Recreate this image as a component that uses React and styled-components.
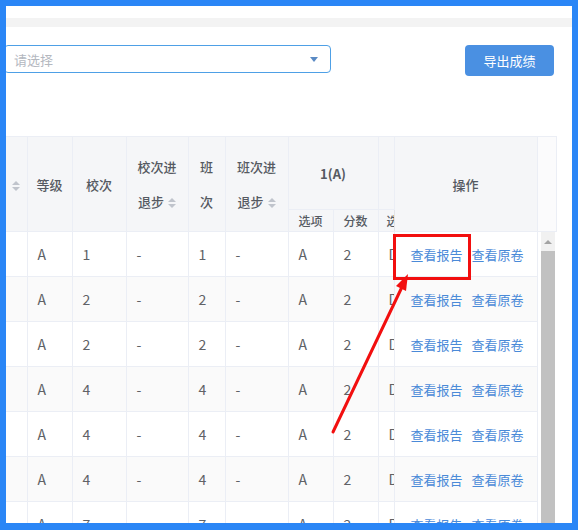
import React from 'react'
import styled, { createGlobalStyle } from 'styled-components'

const Global = createGlobalStyle`
body{
margin:0;
background:#fff;
font-family:"Noto Sans CJK SC","Liberation Sans",sans-serif;
}
`

const Frame = styled.div`
position:relative;
width:578px;
height:530px;
box-sizing:border-box;
border:6px solid #2a86f6;
border-bottom-width:7px;
background:#fff;
overflow:hidden;
`

const Content = styled.div`
display:flex;
flex-direction:column;
height:100%;
overflow:hidden;
`

const TopStrip = styled.div`
height:12px;
background:#fff;
`
const GrayBand = styled.div`
height:9px;
background:#f3f3f3;
`

const Toolbar = styled.div`
display:flex;
align-items:flex-start;
justify-content:space-between;
padding:18px 18px 0 0;
height:31px;
margin-left:-2px;
`

const Select = styled.div`
width:327px;
height:28px;
border:1px solid #4ea0e6;
border-radius:4px;
display:flex;
align-items:center;
justify-content:space-between;
padding:0 12px 0 9px;
box-sizing:border-box;
`
const Placeholder = styled.span`
font-size:13px;
color:#b4b8bf;
`
const Caret = styled.span`
width:0;
height:0;
border-left:4px solid transparent;
border-right:4px solid transparent;
border-top:5px solid #5a8ac4;
`

const ExportButton = styled.button`
width:89px;
height:31px;
border:none;
border-radius:4px;
background:#4a90e2;
color:#fff;
font-size:13px;
font-family:inherit;
`

const TableArea = styled.div`
display:flex;
margin-top:60px;
flex:1;
min-height:0;
`

const Table = styled.table`
width:531px;
table-layout:fixed;
border-collapse:collapse;
border-top:1px solid #ebeef5;
flex:none;
align-self:flex-start;
`

const Th = styled.th`
background:#f5f6f8;
border-right:1px solid #ebeef5;
border-bottom:1px solid #ebeef5;
color:#555a62;
font-size:13px;
font-weight:${p => (p.$bold ? 700 : 500)};
padding:0;
height:${p => p.$h || 'auto'};
text-align:center;
line-height:35px;
overflow:hidden;
white-space:nowrap;
${p => p.$fixed && 'border-left:1px solid #e2e4e8;'}
`

const SubTh = styled(Th)`
font-size:12px;
line-height:20px;
height:21px;
text-align:${p => (p.$left ? 'left' : 'center')};
padding-left:${p => (p.$left ? '8px' : '0')};
`

const Row = styled.tr`
background:${p => (p.$striped ? '#fafafa' : '#fff')};
`

const Td = styled.td`
height:44px;
padding:0 0 0 10px;
border-right:1px solid #ebeef5;
border-bottom:1px solid #ebeef5;
font-size:14px;
color:#606266;
overflow:hidden;
white-space:nowrap;
${p => p.$fixed && 'border-left:1px solid #e2e4e8; padding-left:16px;'}
`

const Link = styled.a`
color:#4a8ad8;
font-size:13px;
margin-right:9px;
cursor:pointer;
`

const SortIcon = styled.span`
display:inline-flex;
flex-direction:column;
gap:2px;
vertical-align:middle;
margin-left:${p => p.$ml || '4px'};
&::before,&::after{
content:'';
width:0;
height:0;
border-left:4px solid transparent;
border-right:4px solid transparent;
}
&::before{border-bottom:4px solid #c0c4cc;}
&::after{border-top:4px solid #c0c4cc;}
`

const Gutter = styled.div`
width:19px;
display:flex;
flex-direction:column;
flex:none;
`
const GutterHead = styled.div`
height:96px;
box-sizing:border-box;
border-top:1px solid #ebeef5;
border-right:1px solid #ebeef5;
border-bottom:1px solid #ebeef5;
background:#fbfbfc;
`
const Track = styled.div`
flex:1;
margin:0 2px 0 3px;
background:#f1f1f1;
display:flex;
flex-direction:column;
align-items:center;
`
const UpArrow = styled.span`
margin-top:8px;
width:0;
height:0;
border-left:4px solid transparent;
border-right:4px solid transparent;
border-bottom:4px solid #a3a3a3;
`
const Thumb = styled.div`
margin-top:7px;
width:100%;
flex:1;
background:#c1c1c1;
`

const Highlight = styled.div`
position:absolute;
left:387px;
top:228px;
width:78px;
height:46px;
box-sizing:border-box;
border:3px solid #f20f0f;
pointer-events:none;
`

const Arrow = styled.svg`
position:absolute;
left:0;
top:0;
pointer-events:none;
`

const rows = [
  ['A', '1', '-', '1', '-', 'A', '2', 'D'],
  ['A', '2', '-', '2', '-', 'A', '2', 'D'],
  ['A', '2', '-', '2', '-', 'A', '2', 'D'],
  ['A', '4', '-', '4', '-', 'A', '2', 'D'],
  ['A', '4', '-', '4', '-', 'A', '2', 'D'],
  ['A', '4', '-', '4', '-', 'A', '2', 'D'],
  ['A', '7', '-', '7', '-', 'A', '2', 'D'],
]

const widths = [21, 45, 54, 62, 37, 63, 45, 45, 16, 143]

export default function App() {
  return (
    <Frame>
      <Global />
      <Content>
        <TopStrip />
        <GrayBand />
        <Toolbar>
          <Select>
            <Placeholder>请选择</Placeholder>
            <Caret />
          </Select>
          <ExportButton>导出成绩</ExportButton>
        </Toolbar>
        <TableArea>
          <Table>
            <colgroup>
              {widths.map((w, i) => <col key={i} style={{ width: w }} />)}
            </colgroup>
            <thead>
              <tr>
                <Th rowSpan={2}><SortIcon $ml="0" /></Th>
                <Th rowSpan={2}>等级</Th>
                <Th rowSpan={2}>校次</Th>
                <Th rowSpan={2}>校次进<br />退步<SortIcon /></Th>
                <Th rowSpan={2}>班<br />次</Th>
                <Th rowSpan={2}>班次进<br />退步<SortIcon /></Th>
                <Th colSpan={2} $h="72px" $bold>1(A)</Th>
                <Th $h="72px"></Th>
                <Th rowSpan={2} $fixed>操作</Th>
              </tr>
              <tr>
                <SubTh>选项</SubTh>
                <SubTh>分数</SubTh>
                <SubTh $left>选</SubTh>
              </tr>
            </thead>
            <tbody>
              {rows.map((r, i) => (
                <Row key={i} $striped={i % 2 === 1}>
                  <Td />
                  {r.map((c, j) => <Td key={j}>{c}</Td>)}
                  <Td $fixed>
                    <Link>查看报告</Link>
                    <Link>查看原卷</Link>
                  </Td>
                </Row>
              ))}
            </tbody>
          </Table>
          <Gutter>
            <GutterHead />
            <Track>
              <UpArrow />
              <Thumb />
            </Track>
          </Gutter>
        </TableArea>
      </Content>
      <Highlight />
      <Arrow width="566" height="517" viewBox="0 0 566 517">
        <line x1="327" y1="426" x2="396" y2="281" stroke="#f20f0f" strokeWidth="3" strokeLinecap="round" />
        <polygon points="402,268 400,285 390,280" fill="#f20f0f" />
      </Arrow>
    </Frame>
  )
}
